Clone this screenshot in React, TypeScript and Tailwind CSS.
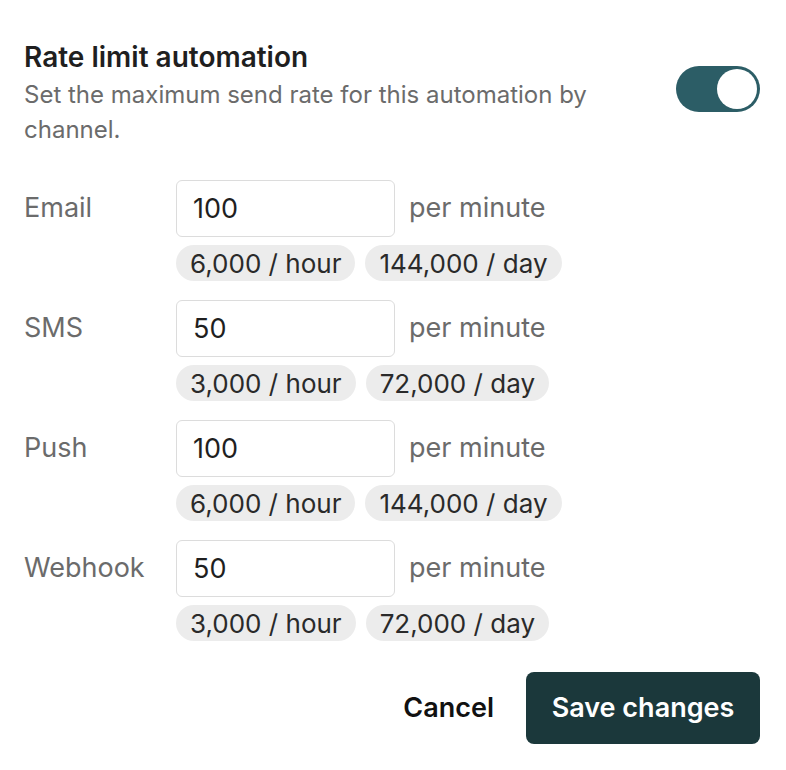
import { useState } from 'react';

type Channel = {
  name: string;
  perMinute: number;
};

const channels: Channel[] = [
  { name: 'Email', perMinute: 100 },
  { name: 'SMS', perMinute: 50 },
  { name: 'Push', perMinute: 100 },
  { name: 'Webhook', perMinute: 50 },
];

function fmt(n: number): string {
  return n.toLocaleString('en-US');
}

function ChannelRow({ channel }: { channel: Channel }) {
  const [value, setValue] = useState(String(channel.perMinute));
  const n = Number(value) || 0;
  return (
    <div className="flex">
      <div className="w-[152px] shrink-0 h-[57px] flex items-center text-[27px] text-[#6b6b6b]">{channel.name}</div>
      <div className="flex flex-col gap-[8px]">
        <div className="flex items-center gap-[14px]">
          <input
            value={value}
            onChange={e => setValue(e.target.value)}
            className="w-[219px] h-[57px] rounded-[6px] border border-[#dcdcdc] px-[16px] text-[27px] text-[#1f1f1f] outline-none"
          />
          <span className="text-[27px] text-[#6b6b6b]">per minute</span>
        </div>
        <div className="flex gap-[10px]">
          <span className="h-[36px] flex items-center rounded-full bg-[#ececec] px-[14px] text-[26px] text-[#2a2a2a]">
            {fmt(n * 60)} / hour
          </span>
          <span className="h-[36px] flex items-center rounded-full bg-[#ececec] px-[14px] text-[26px] text-[#2a2a2a]">
            {fmt(n * 60 * 24)} / day
          </span>
        </div>
      </div>
    </div>
  );
}

export default function App() {
  const [enabled, setEnabled] = useState(true);

  return (
    <div className="w-[786px] h-[770px] bg-white px-[24px] pt-[40px] font-['Inter',sans-serif]">
      {/* Header */}
      <div className="flex items-start justify-between">
        <div className="w-[600px]">
          <h2 className="text-[28px] leading-[34px] font-semibold text-[#1f1f1f]">Rate limit automation</h2>
          <p className="mt-[3px] text-[24px] leading-[35px] text-[#6b6b6b]">
            Set the maximum send rate for this automation by channel.
          </p>
        </div>
        <button
          onClick={() => setEnabled(!enabled)}
          className={`mt-[26px] mr-[2px] w-[84px] h-[46px] shrink-0 rounded-full p-[3px] flex ${
            enabled ? 'bg-[#2c5d66] justify-end' : 'bg-[#d4d4d4] justify-start'
          }`}
        >
          <span className="w-[40px] h-[40px] rounded-full bg-white block" />
        </button>
      </div>

      {/* Channels */}
      <div className="mt-[33px] flex flex-col gap-[19px]">
        {channels.map(c => (
          <ChannelRow key={c.name} channel={c} />
        ))}
      </div>

      {/* Actions */}
      <div className="mt-[31px] flex items-center justify-end gap-[32px] pr-[2px]">
        <button className="text-[27px] font-semibold text-[#111]">Cancel</button>
        <button className="h-[72px] w-[234px] rounded-[8px] bg-[#1b383b] text-[27px] font-semibold text-white">
          Save changes
        </button>
      </div>
    </div>
  );
}
